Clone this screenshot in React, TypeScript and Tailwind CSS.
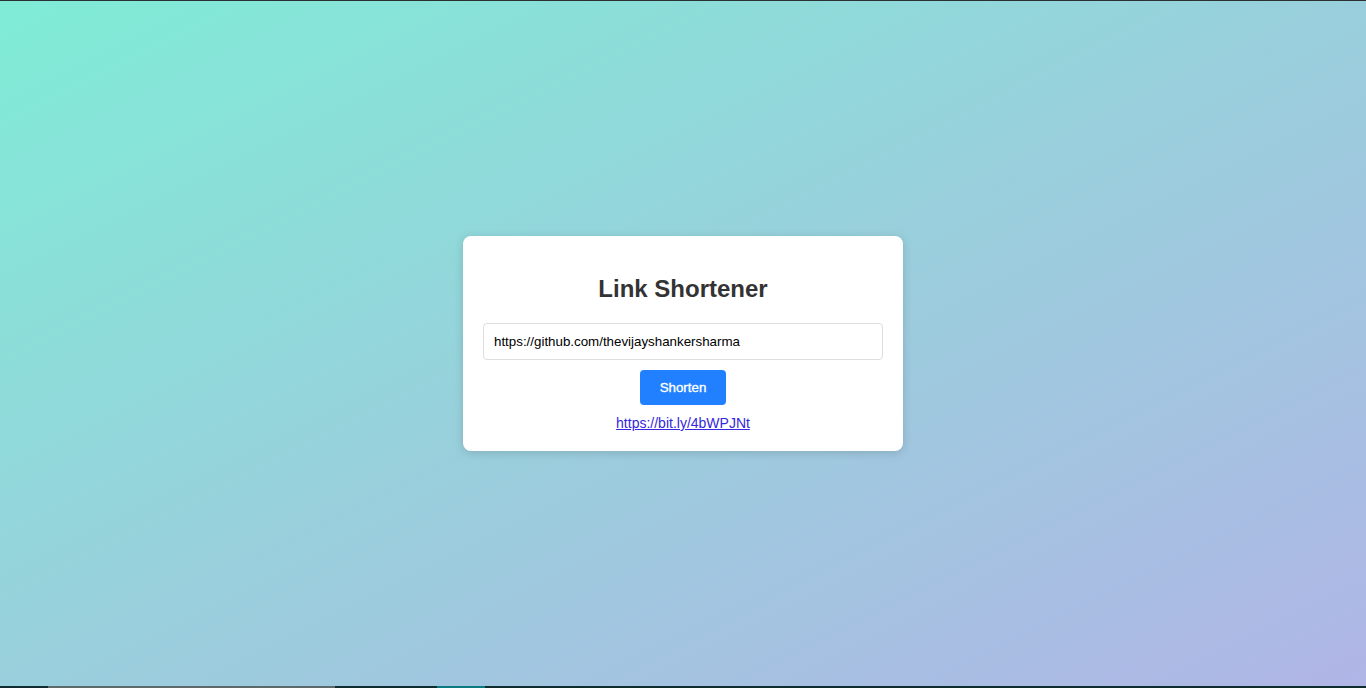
import React from "react";

export default function App() {
  return (
    <div className="flex h-[688px] w-full flex-col overflow-hidden" style={{ fontFamily: '"Liberation Sans", Arial, sans-serif' }}>
      <div className="h-px w-full bg-[#2b3033]" />
      <main className="flex flex-1 items-center justify-center bg-[linear-gradient(to_bottom_right,#7fecd6,#99cfdc_50%,#b0b5e6)]">
        <div className="w-[440px] rounded-lg bg-white px-5 pb-[19px] text-center shadow-[0_2px_10px_rgba(0,0,0,0.15)]">
          <h2 className="my-[20px] pt-[19px] text-[24px] font-bold leading-[28px] text-[#333]">Link Shortener</h2>
          <input
            readOnly
            value="https://github.com/thevijayshankersharma"
            className="block h-[37px] w-full rounded border border-[#ddd] px-[10px] text-[13.33px] text-black outline-none"
          />
          <button className="mt-[10px] h-[35px] rounded bg-[#2080ff] px-5 text-[13.33px] font-normal text-white [-webkit-text-stroke:0.35px_white]">Shorten</button>
          <div className="mt-[9px] text-[14px] leading-[18px]">
            <a href="#" className="text-[#3527e0] underline">https://bit.ly/4bWPJNt</a>
          </div>
        </div>
      </main>
      <div className="flex h-[2px] w-full bg-[#0f2c31]">
        <div className="w-[48px]" />
        <div className="w-[287px] bg-[#5c6a6c]" />
        <div className="w-[102px]" />
        <div className="w-[48px] bg-[#0b7b82]" />
      </div>
    </div>
  );
}
